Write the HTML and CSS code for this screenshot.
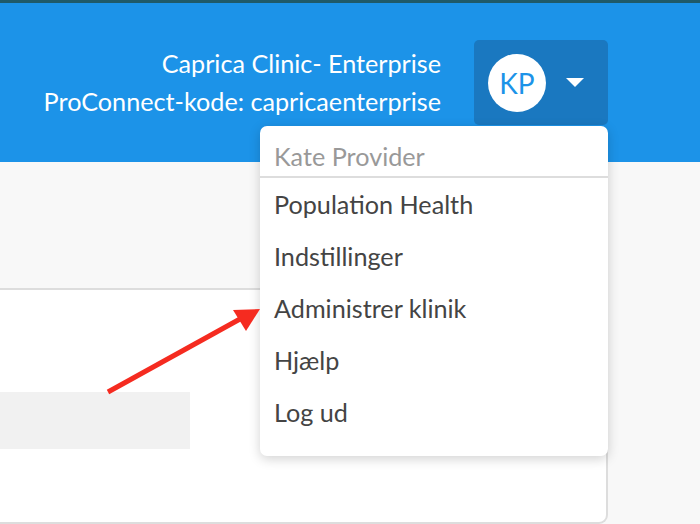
FILE: index.html
```html
<!DOCTYPE html>
<html lang="da">
<head>
    <meta charset="UTF-8">
    <meta name="viewport" content="width=device-width, initial-scale=1.0">
    <title>ProConnect</title>
    <link rel="stylesheet" href="styles.css">
</head>
<body>
    <header class="topbar">
        <div class="clinic-info">
            <div class="clinic-name">Caprica Clinic- Enterprise</div>
            <div class="clinic-code">ProConnect-kode: capricaenterprise</div>
        </div>
        <div class="user-menu">
            <button class="user-button">
                <span class="avatar">KP</span>
                <span class="caret"></span>
            </button>
            <div class="dropdown">
                <div class="dropdown-header">Kate Provider</div>
                <a class="dropdown-item" href="#">Population Health</a>
                <a class="dropdown-item" href="#">Indstillinger</a>
                <a class="dropdown-item" href="#">Administrer klinik</a>
                <a class="dropdown-item" href="#">Hjælp</a>
                <a class="dropdown-item" href="#">Log ud</a>
            </div>
        </div>
    </header>

    <main class="content">
        <div class="card">
            <div class="placeholder-bar"></div>
        </div>
    </main>

    <!-- pil der peger på "Administrer klinik" -->
    <svg class="pointer-arrow" width="700" height="524" viewBox="0 0 700 524">
        <line x1="108" y1="392" x2="240" y2="319" stroke="#f52b20" stroke-width="5"/>
        <polygon points="260,309 233,310 246,331" fill="#f52b20"/>
    </svg>
</body>
</html>
```

FILE: styles.css
```css
/* Styles globaux */
body {
    font-family: Lato, "Open Sans", sans-serif;
    margin: 0;
    padding: 0;
    background: #f8f8f8;
    height: 524px;
    overflow: hidden;
}
.topbar {
    height: 159px;
    border-top: 3px solid #1f5a68;
    background: #1c93e8;
    display: flex;
    justify-content: flex-end;
    align-items: flex-start;
    padding-right: 92px;
    box-sizing: content-box;
}
.clinic-info {
    text-align: right;
    color: #fff;
    font-size: 25.2px;
    line-height: 38px;
    margin-top: 41px;
    margin-right: 33px;
}
.user-menu {
    position: relative;
    margin-top: 37px;
}
.user-button {
    width: 134px;
    height: 85px;
    background: #1a78c0;
    border: none;
    border-radius: 5px;
    display: flex;
    align-items: center;
    padding: 0 0 0 14px;
    cursor: pointer;
}
.avatar {
    width: 58px;
    height: 58px;
    border-radius: 50%;
    background: #fff;
    color: #1c93e8;
    font-family: Lato, sans-serif;
    font-size: 28px;
    display: flex;
    align-items: center;
    justify-content: center;
}
.caret {
    width: 0;
    height: 0;
    margin-left: 20px;
    border-left: 9px solid transparent;
    border-right: 9px solid transparent;
    border-top: 9px solid #fff;
}
.dropdown {
    position: absolute;
    top: 86px;
    right: 0;
    width: 348px;
    background: #fff;
    border-radius: 7px;
    box-shadow: 0 3px 12px rgba(0, 0, 0, 0.18);
    padding: 13px 0 18px;
    z-index: 2;
}
.dropdown-header {
    color: #999;
    font-size: 25.2px;
    line-height: 35px;
    padding: 0 14px 2px;
    border-bottom: 2px solid #ddd;
}
.dropdown-item {
    display: block;
    color: #444;
    text-decoration: none;
    font-size: 25.2px;
    line-height: 52px;
    padding: 0 14px;
}
.content {
    padding-top: 126px;
}
.card {
    width: 608px;
    height: 236px;
    background: #fff;
    border-top: 2px solid #ddd;
    border-right: 2px solid #ddd;
    border-bottom: 2px solid #ddd;
    border-radius: 0 0 9px 0;
    padding-top: 102px;
    box-sizing: border-box;
}
.placeholder-bar {
    width: 190px;
    height: 57px;
    background: #f1f1f1;
}
.pointer-arrow {
    position: absolute;
    top: 0;
    left: 0;
    z-index: 3;
}
```
